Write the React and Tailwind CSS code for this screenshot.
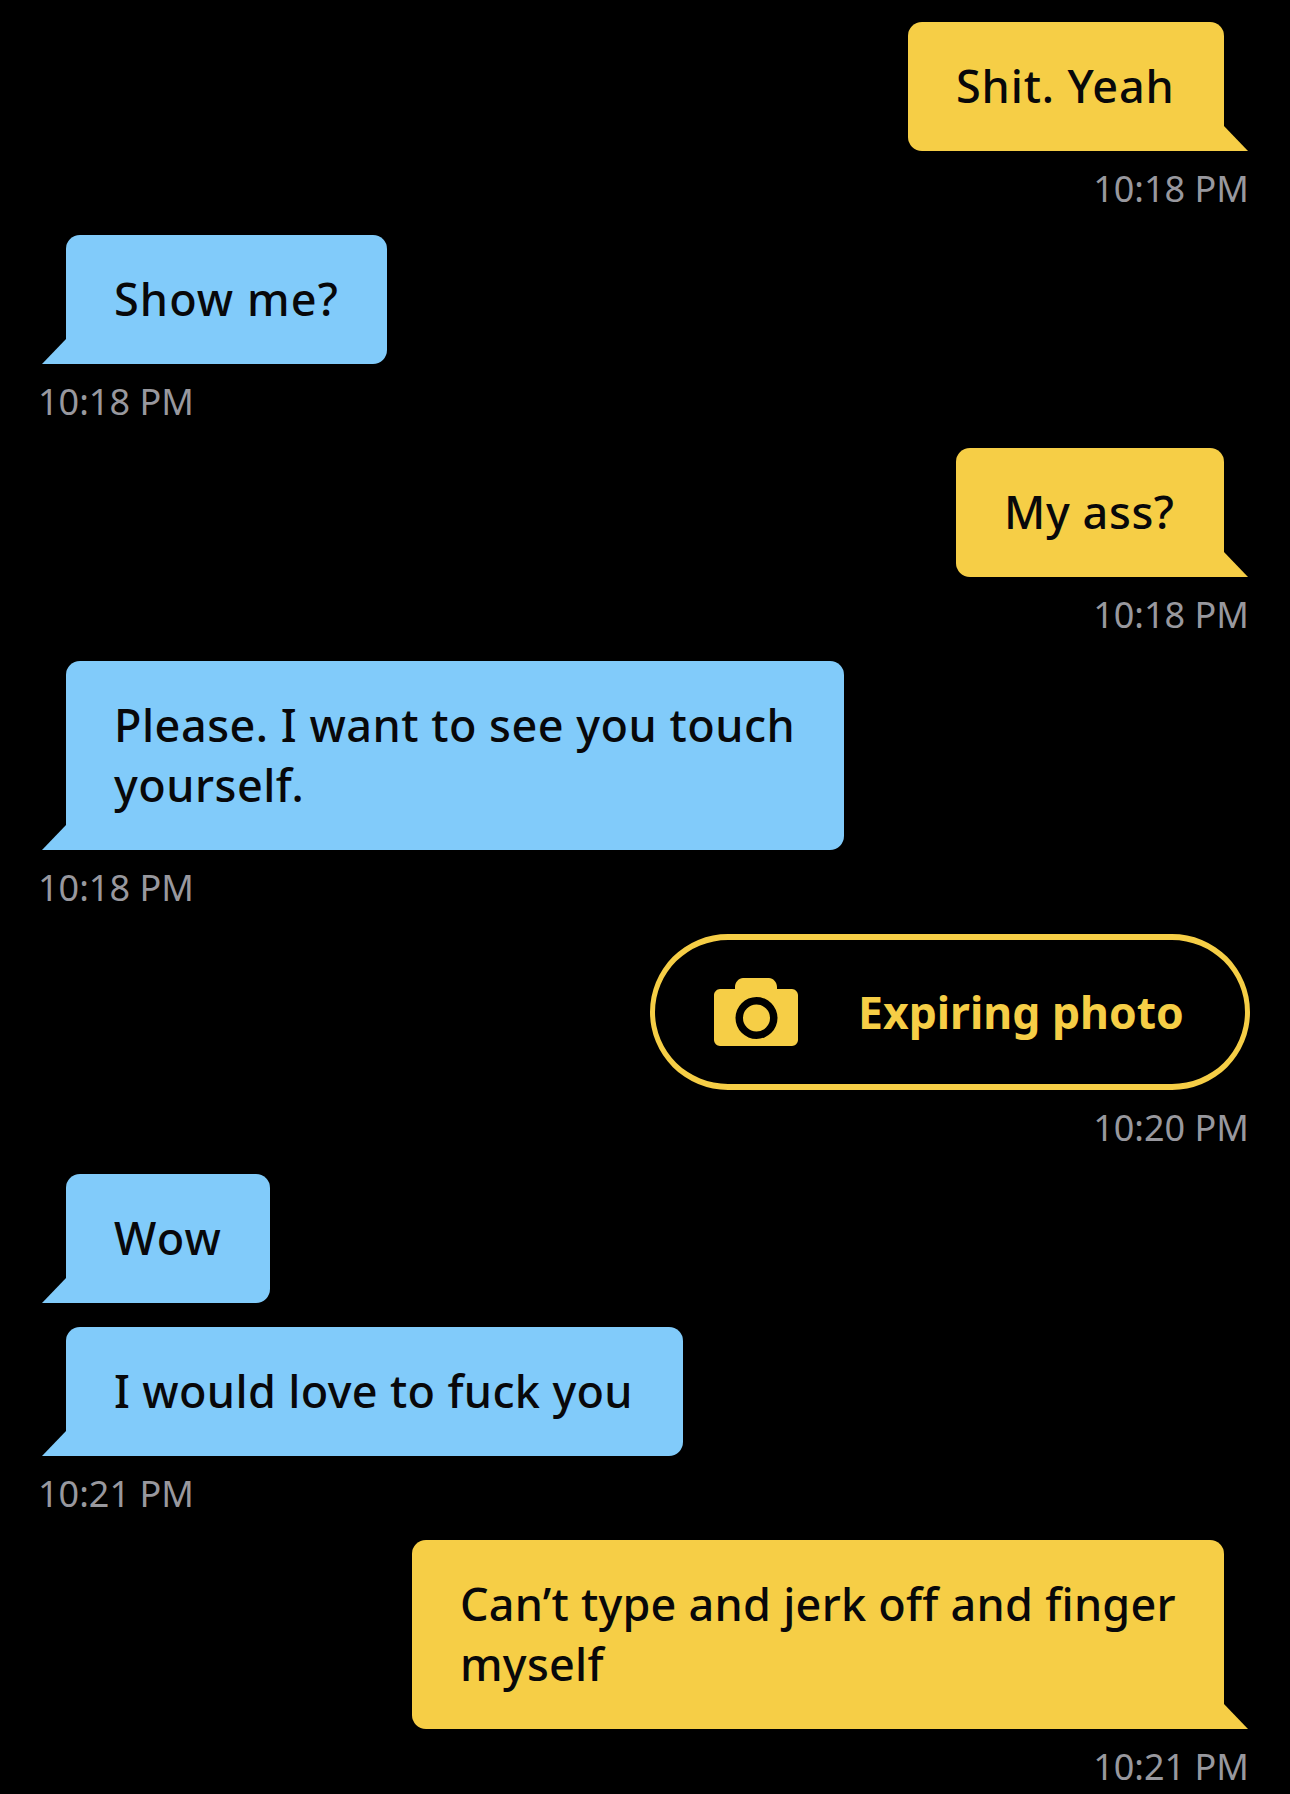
const FONT = "font-['Noto_Sans',sans-serif]";

function Tail({ side, color }) {
  const left = side === "left";
  return (
    <svg
      className={`absolute bottom-0 ${left ? "left-[-24px]" : "right-[-24px]"}`}
      width="25"
      height="26"
      viewBox="0 0 25 26"
    >
      <polygon points={left ? "25,0 25,26 0,26" : "0,0 0,26 25,26"} fill={color} />
    </svg>
  );
}

function Bubble({ side, width, children }) {
  const left = side === "left";
  const color = left ? "#81cbfa" : "#f6ce46";
  return (
    <div
      className={`relative rounded-[14px] pl-[48px] pr-[20px] pt-[34px] pb-[35px] text-[45px] font-medium leading-[60px] text-[#08080a] ${
        left ? "rounded-bl-none bg-[#81cbfa]" : "rounded-br-none bg-[#f6ce46]"
      } ${width}`}
    >
      {children}
      <Tail side={side} color={color} />
    </div>
  );
}

function Time({ children, side }) {
  return (
    <div
      className={`mt-[18px] mb-[26px] text-[36px] leading-[40px] text-[#98989e] ${
        side === "left" ? "self-start ml-[-28px]" : "self-end mr-[-25px]"
      }`}
    >
      {children}
    </div>
  );
}

function Camera() {
  return (
    <svg width="84" height="68" viewBox="0 0 84 68" className="shrink-0">
      <path
        fillRule="evenodd"
        fill="#f6ce46"
        d="M6 11H21V9C21 4 25 0 29 0H55C59 0 63 4 63 9V11H78C81 11 84 14 84 17V62C84 65 81 68 78 68H6C3 68 0 65 0 62V17C0 14 3 11 6 11ZM42.500 19A21 21 0 1 0 42.500 61A21 21 0 1 0 42.500 19ZM42.500 26.500A13.500 13.500 0 1 1 42.500 53.500A13.500 13.500 0 1 1 42.500 26.500Z"
      />
    </svg>
  );
}

export default function App() {
  return (
    <div className={`h-[1794px] overflow-hidden bg-black ${FONT}`}>
      <div className="flex flex-col pt-[22px] pl-[66px] pr-[66px]">
        <div className="flex flex-col items-end">
          <Bubble side="right" width="w-[316px] tracking-[0.85px]">Shit. Yeah</Bubble>
          <Time side="right">10:18 PM</Time>
        </div>
        <div className="flex flex-col items-start">
          <Bubble side="left" width="w-[321px] tracking-[1.1px]">Show me?</Bubble>
          <Time side="left">10:18 PM</Time>
        </div>
        <div className="flex flex-col items-end">
          <Bubble side="right" width="w-[268px] tracking-[0.6px]">My ass?</Bubble>
          <Time side="right">10:18 PM</Time>
        </div>
        <div className="flex flex-col items-start">
          <Bubble side="left" width="w-[778px] tracking-[0.5px]">Please. I want to see you touch yourself.</Bubble>
          <Time side="left">10:18 PM</Time>
        </div>
        <div className="flex flex-col items-end">
          <div className="mr-[-26px] flex h-[156px] w-[600px] items-center rounded-full border-x-[5px] border-y-[6px] border-[#f6ce46] pl-[59px]">
            <Camera />
            <span className="ml-[60px] whitespace-nowrap text-[44.5px] font-bold leading-[60px] text-[#f6ce46]">
              Expiring photo
            </span>
          </div>
          <Time side="right">10:20 PM</Time>
        </div>
        <div className="flex flex-col items-start">
          <Bubble side="left" width="w-[204px] tracking-[1.2px]">Wow</Bubble>
          <div className="h-[24px]" />
          <Bubble side="left" width="w-[617px] tracking-[0.35px]">I would love to fuck you</Bubble>
          <Time side="left">10:21 PM</Time>
        </div>
        <div className="flex flex-col items-end">
          <Bubble side="right" width="w-[812px] tracking-[0.25px]">Can’t type and jerk off and finger myself</Bubble>
          <Time side="right">10:21 PM</Time>
        </div>
      </div>
    </div>
  );
}
